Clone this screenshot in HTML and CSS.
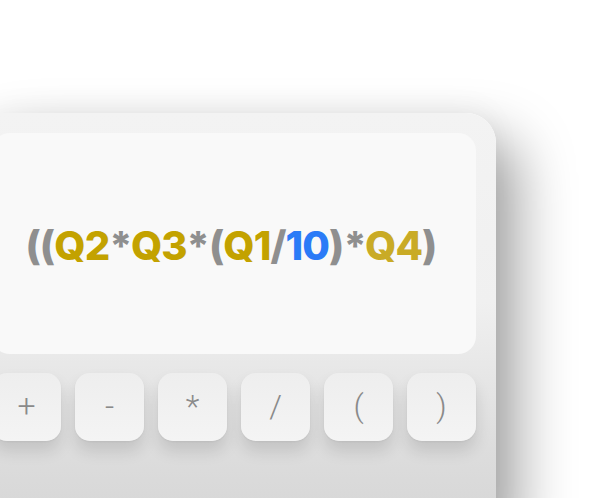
FILE: index.html
```html
<!DOCTYPE html>
<html>
<head>
<meta charset="utf-8">
<link rel="stylesheet" href="styles.css">
</head>
<body>
<div class="page">
  <div class="card">
    <div class="display">
      <div class="expr"><span class="op">((</span><span class="q">Q2</span><span class="op">*</span><span class="q">Q3</span><span class="op">*(</span><span class="q">Q1</span><span class="op">/</span><span class="num">10</span><span class="op">)*</span><span class="q4">Q4</span><span class="op">)</span></div>
    </div>
    <div class="keys">
      <div class="key">+</div>
      <div class="key">-</div>
      <div class="key">*</div>
      <div class="key">/</div>
      <div class="key">(</div>
      <div class="key">)</div>
    </div>
  </div>
</div>
</body>
</html>
```
FILE: styles.css
```css
html, body {
  margin: 0;
  padding: 0;
  background: #ffffff;
  overflow: hidden;
  width: 590px;
  height: 498px;
}
.page {
  padding-top: 113px;
  height: 498px;
  box-sizing: border-box;
  overflow: hidden;
}
.card {
  margin-left: -28px;
  width: 524px;
  height: 420px;
  box-sizing: border-box;
  padding: 20px;
  border-radius: 30px;
  background: linear-gradient(180deg, #f3f3f3 0%, #f0f0f0 45%, #dddddd 80%, #d5d5d5 100%);
  box-shadow: 22px 26px 55px rgba(0, 0, 0, 0.36), 0 -6px 30px rgba(0, 0, 0, 0.04);
  display: flex;
  flex-direction: column;
  gap: 19px;
}
.display {
  height: 221px;
  flex-shrink: 0;
  border-radius: 18px;
  background: #f9f9f9;
  display: flex;
  align-items: center;
  justify-content: center;
}
.expr {
  font-family: Inter, "Noto Sans", sans-serif;
  font-weight: 800;
  font-size: 40px;
  letter-spacing: -0.9px;
  padding-top: 4px;
  padding-right: 6px;
}
.op { color: #8f8f8f; }
.q { color: #c3a200; }
.q4 { color: #c9ab26; }
.num { color: #2b7bf7; }
.keys {
  display: flex;
  gap: 14px;
}
.key {
  width: 69px;
  height: 68px;
  border-radius: 15px;
  background: linear-gradient(180deg, #eeeeee 0%, #f4f4f4 100%);
  box-shadow: 0 10px 16px rgba(0, 0, 0, 0.12), 0 1px 2px rgba(0, 0, 0, 0.05);
  display: flex;
  align-items: center;
  justify-content: center;
  font-family: Roboto, "Noto Sans", sans-serif;
  font-weight: 300;
  font-size: 32px;
  color: #8a8a8a;
  padding-bottom: 2px;
  box-sizing: border-box;
}
```
